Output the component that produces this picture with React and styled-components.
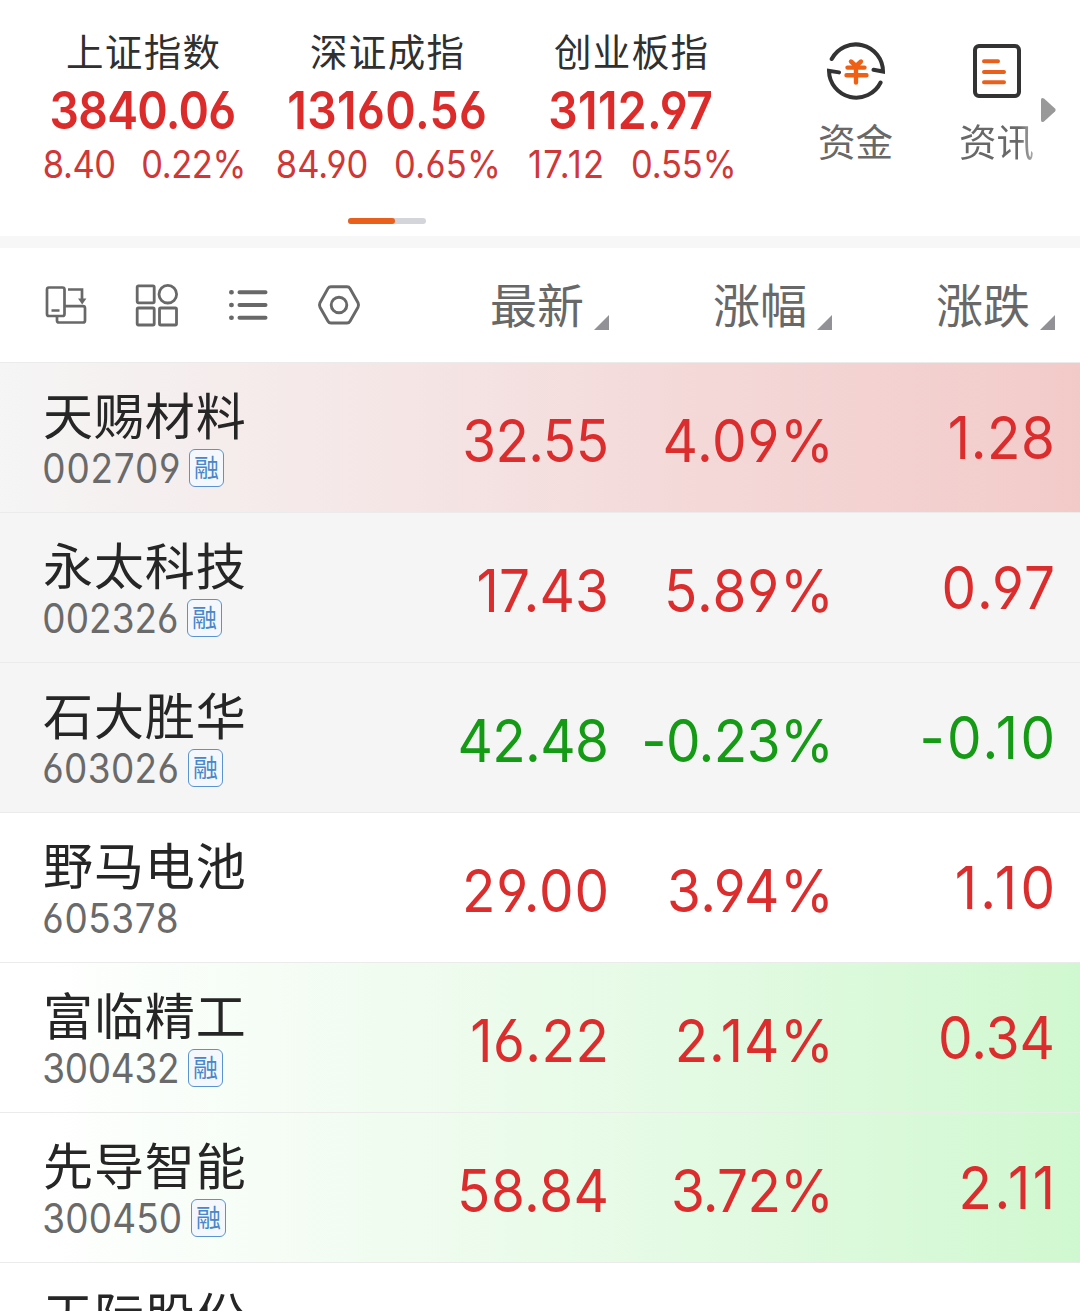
import React from "react";
import styled, {createGlobalStyle} from "styled-components";

const GlobalStyle = createGlobalStyle`
    body {
        margin: 0;
        background: #fff;
        overflow: hidden;
    }
    * {
        box-sizing: border-box;
    }
`

const Screen = styled.div`
    width: 1080px;
    height: 1311px;
    overflow: hidden;
    background: #fff;
    font-family: Inter, "Noto Sans CJK SC", sans-serif;
    font-feature-settings: "cv03", "cv04";
    white-space: nowrap;
`

const TopBar = styled.header`
    display: flex;
    height: 200px;
    padding-left: 21px;
`

const IndexCard = styled.div`
    display: flex;
    flex-direction: column;
    align-items: center;
    width: 244px;
    padding-top: 29px;
`

const IndexName = styled.div`
    height: 48px;
    line-height: 47px;
    font-size: 37.5px;
    letter-spacing: 1.4px;
    margin-right: -1.4px;
    color: #303030;
`

const IndexValue = styled.div`
    height: 68px;
    line-height: 68px;
    font-size: 52px;
    font-weight: 560;
    letter-spacing: ${props => props.$track}px;
    color: #dc2b2b;
    transform: scaleX(0.89);
`

const IndexChange = styled.div`
    display: flex;
    gap: 28px;
    height: 40px;
    line-height: 40px;
    font-size: 37.5px;
    color: #d03737;
    transform: translateX(1px) scaleX(0.92);
`

const Change = styled.span`
    letter-spacing: ${props => props.$track}px;
`

const Shortcuts = styled.nav`
    display: flex;
    margin-left: 32px;
`

const Shortcut = styled.div`
    display: flex;
    flex-direction: column;
    align-items: center;
    width: 141px;
    padding-top: 41px;
    font-size: 37.5px;
    line-height: 84px;
    color: ${props => props.$faded ? "transparent" : "#686868"};
    background: ${props => props.$faded ? "linear-gradient(90deg, #686868 66%, #b8b8b8 78%)" : "none"};
    background-clip: text;
`

const NextArrow = styled.svg`
    position: absolute;
    left: 1040px;
    top: 97px;
`

const Pager = styled.div`
    display: flex;
    width: 78px;
    height: 6px;
    margin: 18px 0 12px 348px;
    border-radius: 3px;
    background: #d3d5da;
`

const PagerThumb = styled.div`
    width: 47px;
    border-radius: 3px;
    background: #e95f1c;
`

const Divider = styled.div`
    height: 12px;
    background: #f7f7f8;
`

const TableHead = styled.div`
    display: flex;
    align-items: center;
    height: 114px;
`

const Tools = styled.div`
    display: flex;
    gap: 47px;
    width: 386px;
    padding-left: 44px;
`

const SortLabel = styled.div`
    display: flex;
    align-items: flex-end;
    justify-content: flex-end;
    width: 223px;
    height: 60px;
    padding-bottom: 5px;
    line-height: 48px;
    font-size: 47px;
    color: #686868;
`

const SortMark = styled.svg`
    margin-left: 10px;
`

const Row = styled.div`
    display: flex;
    height: 150px;
    border-top: 1px solid #ebebeb;
    background: ${props => props.$bg};
`

const Stock = styled.div`
    width: 385px;
    padding: 25px 0 0 43px;
`

const StockName = styled.div`
    height: 57px;
    line-height: 58px;
    font-size: 50px;
    letter-spacing: 0.9px;
    color: #262626;
`

const StockCode = styled.div`
    display: flex;
    align-items: center;
    height: 46px;
    line-height: 46px;
`

const Code = styled.span`
    width: ${props => props.$width}px;
    font-size: 41px;
    letter-spacing: ${props => props.$track}px;
    color: #6a6a6a;
    transform: translateX(-0.7px) scaleX(0.9);
    transform-origin: left;
`

const MarginTag = styled.span`
    width: 35px;
    height: 38px;
    margin-left: 10px;
    border: 1.5px solid #5a94d0;
    border-radius: 6px;
    background: #f4f8fd;
    color: #4a87c8;
    font-size: 25px;
    line-height: 36px;
    text-align: center;
`

const Cell = styled.div`
    width: 223px;
    padding-top: ${props => props.$last ? 38 : 41}px;
    line-height: 74px;
    font-size: 59px;
    letter-spacing: ${props => props.$track}px;
    text-align: right;
    color: ${props => props.$down ? "#149a14" : "#db2d2d"};
    transform: translateX(${props => props.$track * 0.93 + props.$nudge}px) scaleX(0.93);
    transform-origin: right;
`

const indices = [
    {name: "上证指数", value: "3840.06", diff: "8.40", pct: "0.22%", track: [-0.8, -0.5, -0.5]},
    {name: "深证成指", value: "13160.56", diff: "84.90", pct: "0.65%", track: [0.4, 0, 0.3]},
    {name: "创业板指", value: "3112.97", diff: "17.12", pct: "0.55%", track: [0.4, 1.3, -0.2]},
]

const red = "linear-gradient(90deg, #f5f5f5 0%, #f5e6e6 36%, #f4d8d8 65%, #f2cbc9 100%)";
const green = "linear-gradient(90deg, #ffffff 3%, #f1fcf1 35%, #e3fae3 65%, #d0f8d0 100%)";

const stocks = [
    {name: "天赐材料", code: "002709", codeWidth: 136, tag: true, cells: ["32.55", "4.09%", "1.28"], track: [0.9, -0.6, 0.8, 0.6], bg: red},
    {name: "永太科技", code: "002326", codeWidth: 134, tag: true, cells: ["17.43", "5.89%", "0.97"], track: [0.1, 0.2, 1, 2.3], bg: "#f5f5f5"},
    {name: "石大胜华", code: "603026", codeWidth: 135, tag: true, cells: ["42.48", "-0.23%", "-0.10"], track: [0.4, -0.7, -0.6, 2.4], bg: "#f5f5f5"},
    {name: "野马电池", code: "605378", codeWidth: 135, cells: ["29.00", "3.94%", "1.10"], track: [0.7, 0.9, 0.7, 3.6], bg: "#fff"},
    {name: "富临精工", code: "300432", codeWidth: 135, tag: true, cells: ["16.22", "2.14%", "0.34"], track: [-0.3, 0.5, 0.8, 0], bg: green},
    {name: "先导智能", code: "300450", codeWidth: 138, tag: true, cells: ["58.84", "3.72%", "2.11"], track: [0.2, 0.5, -0.8, 2.6], bg: green},
    {name: "天际股份", cells: [], bg: "#fff"},
]

function FundsIcon() {
    return (
        <svg width="60" height="60" viewBox="0 0 60 60" fill="none" strokeLinecap="round">
            <path d="M5.7 18A27.2 27.2 0 0 1 57 30.5L47.5 28.8" stroke="#333" strokeWidth="4"/>
            <path d="M54.6 41.5A27.2 27.2 0 0 1 3 29.8L13 31.4" stroke="#333" strokeWidth="4"/>
            <path d="M25 20.5L30 25L35 20.5M21.5 26.6H38.5M20.5 34.3H40.5M30 26V41.5" stroke="#ef5f14" strokeWidth="4.4"/>
        </svg>
    )
}

function NewsIcon() {
    return (
        <svg width="60" height="60" viewBox="0 0 60 60" fill="none" strokeLinecap="round">
            <rect x="8" y="5" width="44" height="50" rx="4" stroke="#333" strokeWidth="4"/>
            <path d="M17 20.2H31M17 31H37M17 41.3H37" stroke="#e9601c" strokeWidth="4"/>
        </svg>
    )
}

function ToolIcons() {
    return (
        <Tools>
            <svg width="44" height="44" viewBox="0 0 44 44" fill="none" stroke="#686868" strokeWidth="2.7">
                <rect x="3" y="4.5" width="17.5" height="28.5" rx="2"/>
                <path d="M7.5 27.5H15.5M24 6.5H38V18M20 23.2H39Q41 23.2 41 25.2V37.5Q41 39.5 39 39.5H15Q13 39.5 13 37.5V32"/>
                <path d="M34 15.5H42.4L38.2 21.5Z" fill="#686868" stroke="none"/>
            </svg>
            <svg width="44" height="44" viewBox="0 0 44 44" fill="none" stroke="#686868" strokeWidth="2.8">
                <rect x="2.2" y="2.8" width="17" height="17" rx="1.2"/>
                <circle cx="32.8" cy="11.2" r="8.8"/>
                <rect x="2.2" y="25" width="17" height="17" rx="1.2"/>
                <rect x="24.5" y="25" width="17" height="17" rx="1.2"/>
            </svg>
            <svg width="44" height="44" viewBox="0 0 44 44" fill="none" stroke="#686868" strokeWidth="4" strokeLinecap="round">
                <path d="M13.5 9.3H39.5M13.5 22H39.5M13.5 34.8H39.5"/>
                <path d="M5.3 9.3H5.6M5.3 22H5.6M5.3 34.8H5.6" strokeWidth="4.6"/>
            </svg>
            <svg width="44" height="44" viewBox="0 0 44 44" fill="none" stroke="#686868" strokeWidth="2.9" strokeLinejoin="round">
                <path d="M14 3.7H30Q32 3.7 33 5.4L41 19.7Q42 22 41 24.2L33 38.2Q32 40 30 40H14Q12 40 11 38.2L3 24.2Q2 22 3 19.7L11 5.4Q12 3.7 14 3.7Z"/>
                <circle cx="22" cy="22" r="7.8"/>
            </svg>
        </Tools>
    )
}

function App() {
    return (
        <Screen>
            <GlobalStyle/>
            <TopBar>
                {indices.map(item => (
                    <IndexCard key={item.name}>
                        <IndexName>{item.name}</IndexName>
                        <IndexValue $track={item.track[0]}>{item.value}</IndexValue>
                        <IndexChange>
                            <Change $track={item.track[1]}>{item.diff}</Change>
                            <Change $track={item.track[2]}>{item.pct}</Change>
                        </IndexChange>
                    </IndexCard>
                ))}
                <Shortcuts>
                    <Shortcut><FundsIcon/>资金</Shortcut>
                    <Shortcut $faded><NewsIcon/>资讯</Shortcut>
                </Shortcuts>
                <NextArrow width="17" height="26" viewBox="0 0 17 26">
                    <path d="M1 3Q1 0 4 1.5L15 11.5Q16.5 13 15 14.5L4 24.5Q1 26 1 23Z" fill="#999"/>
                </NextArrow>
            </TopBar>
            <Pager><PagerThumb/></Pager>
            <Divider/>
            <TableHead>
                <ToolIcons/>
                {["最新", "涨幅", "涨跌"].map(label => (
                    <SortLabel key={label}>
                        {label}
                        <SortMark width="15" height="15" viewBox="0 0 15 15">
                            <path d="M15 0V15H0Z" fill="#919196"/>
                        </SortMark>
                    </SortLabel>
                ))}
            </TableHead>
            {stocks.map(stock => (
                <Row key={stock.name} $bg={stock.bg}>
                    <Stock>
                        <StockName>{stock.name}</StockName>
                        {stock.code && (
                            <StockCode>
                                <Code $width={stock.codeWidth} $track={stock.track[0]}>{stock.code}</Code>
                                {stock.tag && <MarginTag>融</MarginTag>}
                            </StockCode>
                        )}
                    </Stock>
                    {stock.cells.map((cell, i) => (
                        <Cell
                            key={i}
                            $last={i === 2}
                            $down={stock.cells[2].startsWith("-")}
                            $track={stock.track[i + 1]}
                            $nudge={i === 1 ? 3 : 1}
                        >
                            {cell}
                        </Cell>
                    ))}
                </Row>
            ))}
        </Screen>
    )
}

export default App
